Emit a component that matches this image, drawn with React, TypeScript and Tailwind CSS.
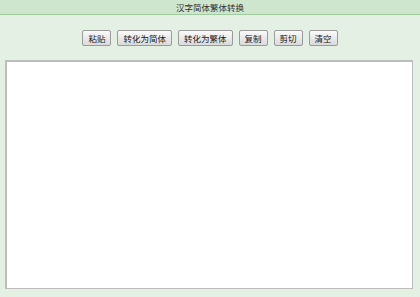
const buttons = ["粘贴", "转化为简体", "转化为繁体", "复制", "剪切", "清空"];

export default function App() {
  return (
    <div
      className="w-[420px] h-[297px] bg-[#e5f0e5] flex flex-col overflow-hidden"
      style={{ fontFamily: '"Noto Sans CJK SC", "Noto Sans", sans-serif' }}
    >
      {/* title bar */}
      <div className="h-[15px] bg-[#cde6cd] border-b border-[#9fcb9f] flex items-center justify-center text-[8.5px] leading-none text-[#333]">
        汉字简体繁体转换
      </div>

      {/* toolbar */}
      <div className="flex justify-center gap-[6px] mt-[15px]">
        {buttons.map((b) => (
          <button
            key={b}
            className="h-[16px] px-[5px] flex items-center justify-center rounded-[2px] border border-[#9a9a9a] bg-gradient-to-b from-[#fafafa] to-[#dadada] text-[8.5px] leading-none text-[#222]"
          >
            {b}
          </button>
        ))}
      </div>

      {/* text area */}
      <div className="mx-[5px] mt-[14px] w-[408px] h-[229px] bg-white border-t-2 border-l-2 border-r border-b border-[#bcbcbc]" />
    </div>
  );
}
